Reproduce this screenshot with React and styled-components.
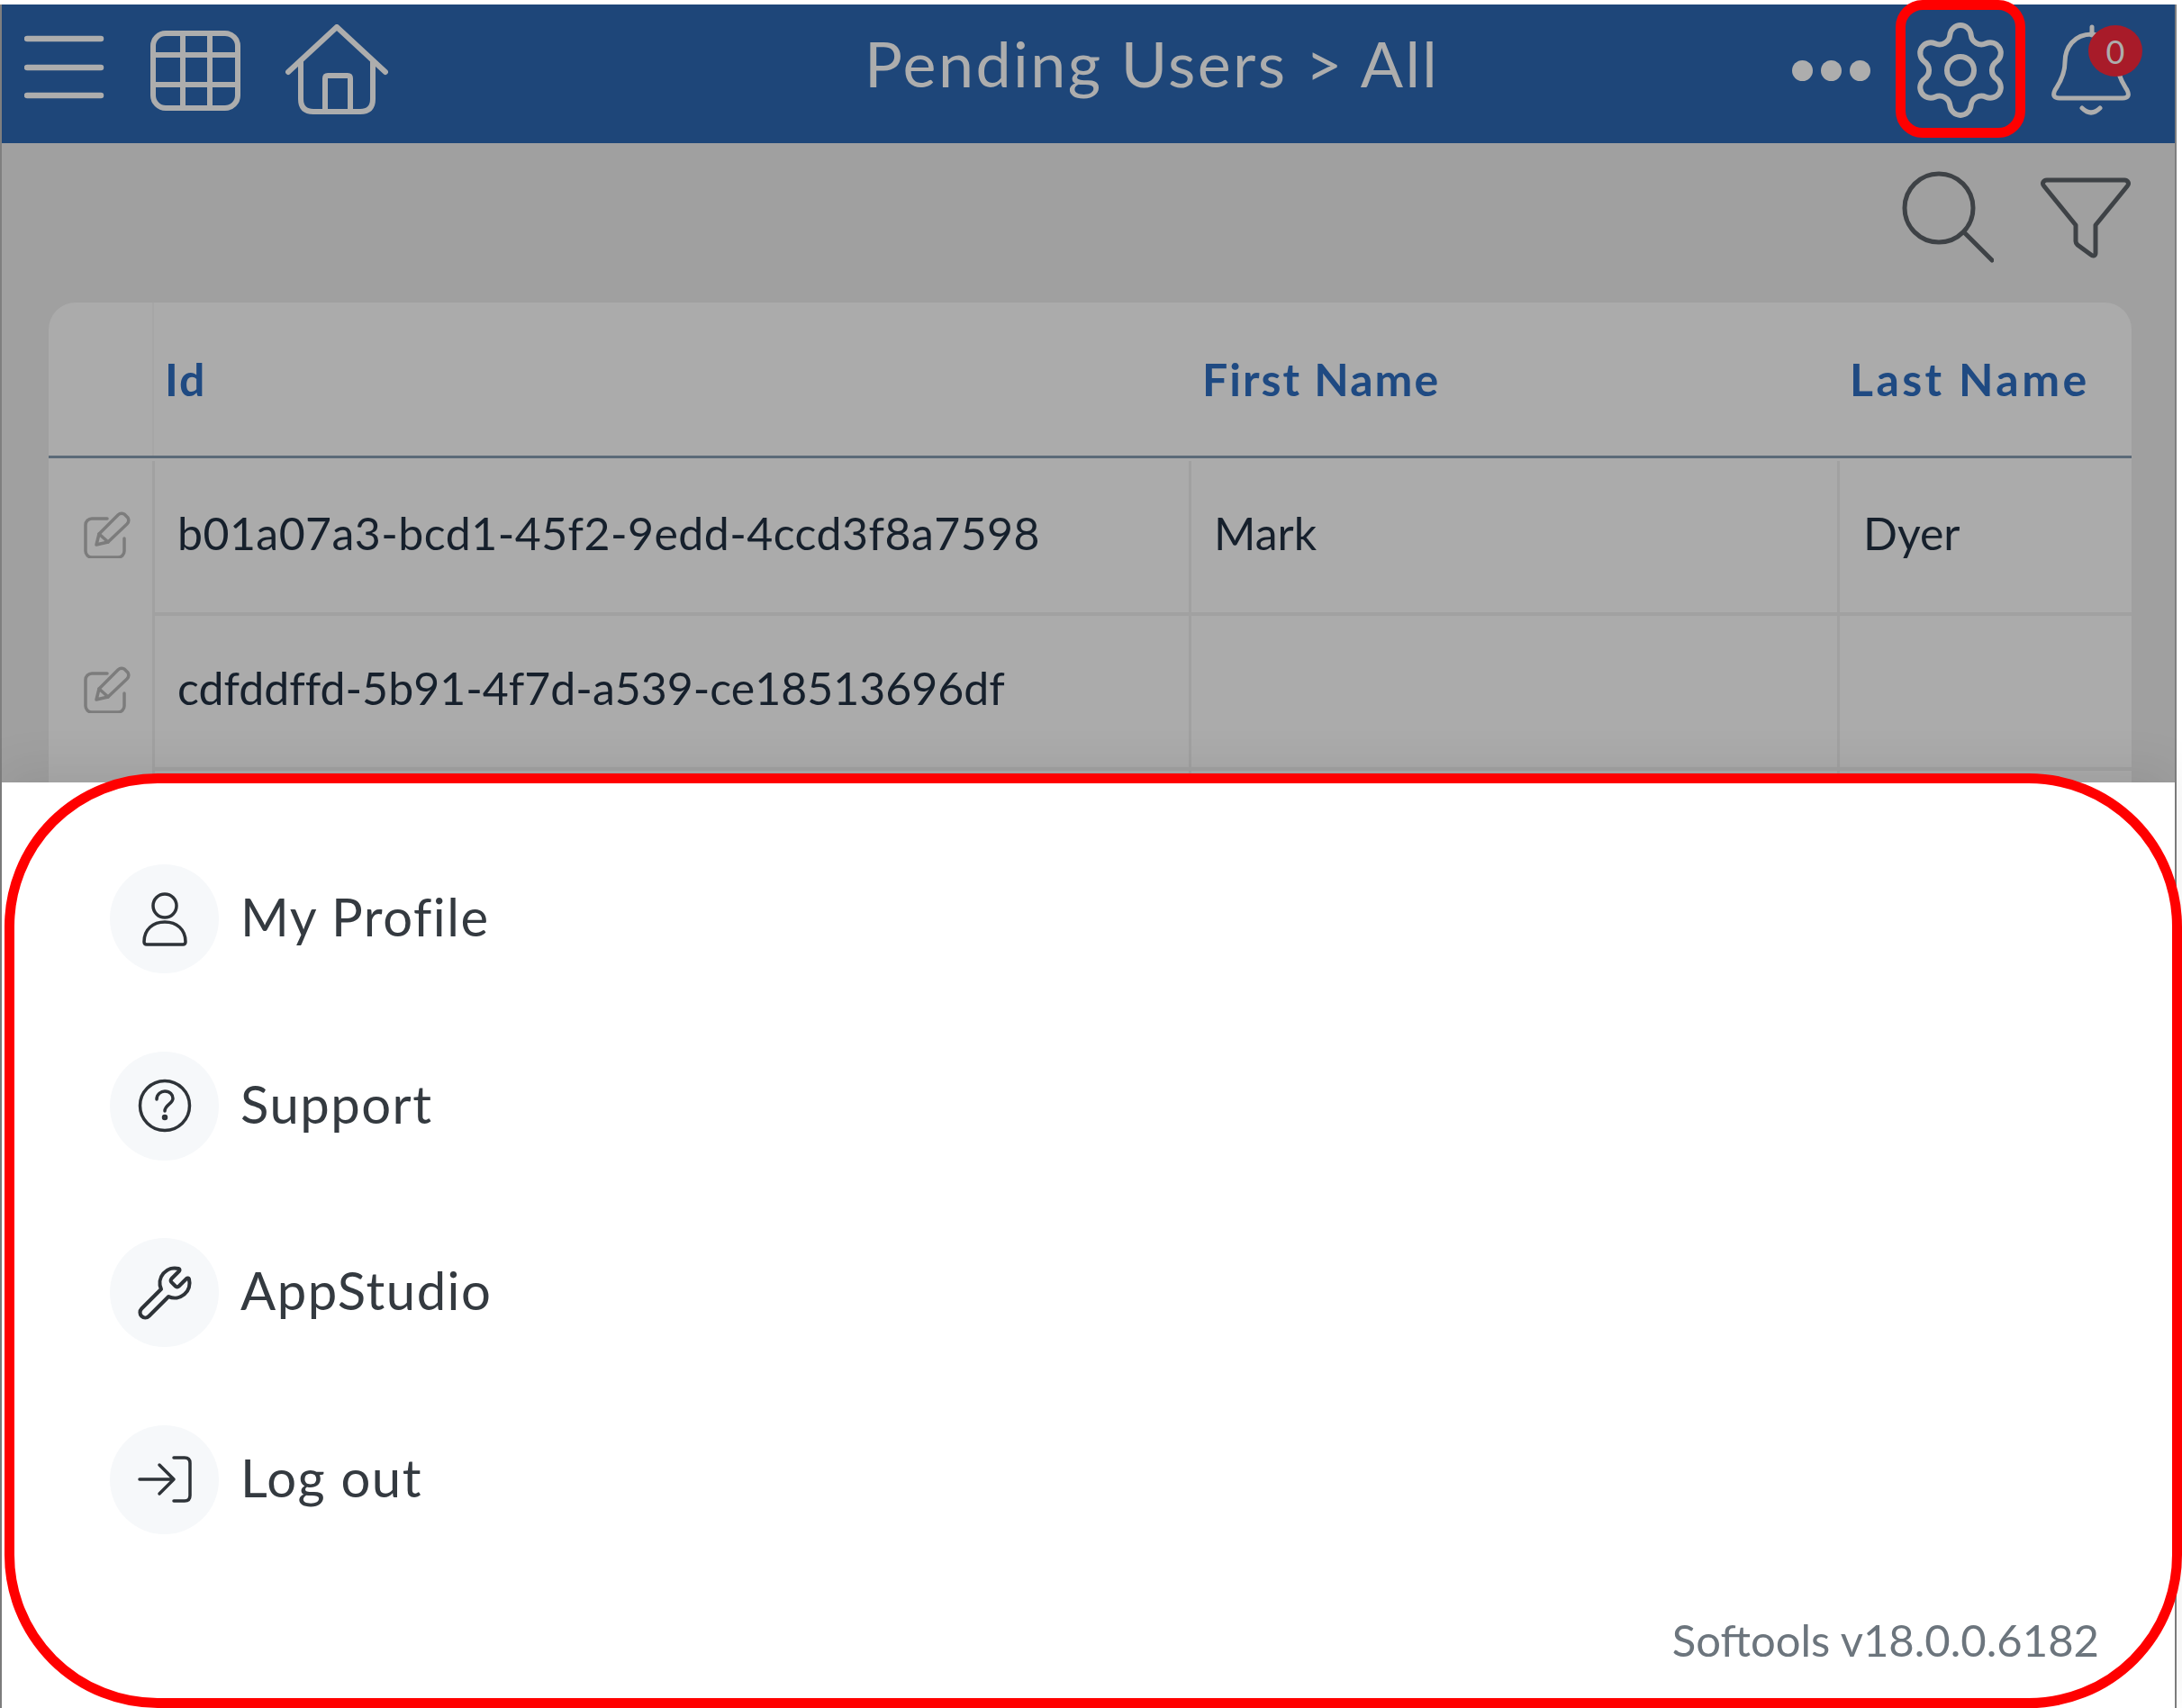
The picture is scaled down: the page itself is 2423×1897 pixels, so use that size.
import React from 'react'
import styled, { createGlobalStyle } from 'styled-components'
import { Settings, Wrench } from 'lucide-react'

const blue = '#1e4679'
const muted = '#adadad'
const ink = '#343a40'
const font = '"Lato", "Noto Sans", sans-serif'

const GlobalStyle = createGlobalStyle`
	html, body {
		margin: 0;
		padding: 0;
		background: #fff;
	}
	body {
		font-family: ${font};
	}
`

const Page = styled.div`
	width: 2417px;
	height: 1897px;
	padding-top: 5px;
	box-sizing: border-box;
	display: flex;
	flex-direction: column;
`

const Frame = styled.div`
	flex: 1;
	display: flex;
	flex-direction: column;
	min-height: 0;
	border-left: 2px solid #7f7f7f;
	border-right: 2px solid #7f7f7f;
`

const Header = styled.header`
	height: 154px;
	flex: none;
	box-sizing: border-box;
	background: ${blue};
	display: flex;
	align-items: center;
	padding: 0 48px 8px 25px;
	color: ${muted};
`

const HeaderLeft = styled.div`
	display: flex;
	align-items: center;
	gap: 50px;
`

const Title = styled.div`
	margin-left: 529px;
	margin-top: -16px;
	font-size: 70px;
	letter-spacing: 2.4px;
	line-height: 1;
	white-space: nowrap;
`

const HeaderRight = styled.div`
	margin-left: auto;
	display: flex;
	align-items: center;
	gap: 50px;
`

const Dots = styled.div`
	display: flex;
	gap: 9px;
`

const Dot = styled.span`
	width: 23px;
	height: 23px;
	border-radius: 50%;
	background: ${muted};
`

const GearBox = styled.div`
	position: relative;
	width: 100px;
	height: 100px;
	display: flex;
	align-items: center;
	justify-content: center;
`

const GearIcon = styled(Settings)`
	flex: none;
`

const Highlight = styled.div`
	position: absolute;
	top: -28px;
	bottom: -25px;
	left: -22px;
	right: -22px;
	border: 11px solid #ff0000;
	border-radius: 30px;
`

const BellBox = styled.div`
	position: relative;
	display: flex;
`

const Badge = styled.span`
	position: absolute;
	top: 1px;
	right: -12px;
	width: 60px;
	height: 57px;
	border-radius: 50%;
	background: #a81b29;
	color: ${muted};
	font-size: 36px;
	display: flex;
	align-items: center;
	justify-content: center;
`

const Backdrop = styled.main`
	height: 710px;
	flex: none;
	overflow: hidden;
	background: #a0a0a0;
`

const Toolbar = styled.div`
	height: 177px;
	box-sizing: border-box;
	display: flex;
	justify-content: flex-end;
	align-items: flex-start;
	gap: 51px;
	padding: 31px 48px 0 0;
	color: #3e4246;
`

const Table = styled.div`
	margin: 0 48px 0 52px;
	background: #ababab;
	border-radius: 30px 30px 0 0;
`

const HeadRow = styled.div`
	display: grid;
	grid-template-columns: 115px 1151px 720px 1fr;
	height: 173px;
	box-sizing: border-box;
	border-bottom: 3px solid #5b6a78;
`

const RowList = styled.div`
	padding-top: 3px;
`

const Row = styled.div`
	display: grid;
	grid-template-columns: 115px 1151px 720px 1fr;
	height: 172px;
	box-sizing: border-box;
`

const HeadCell = styled.div`
	display: flex;
	align-items: center;
	padding-left: ${p => p.$pad || 15}px;
	color: #1f4a82;
	font-size: 50px;
	font-weight: 700;
	letter-spacing: ${p => p.$track || 2}px;
	white-space: nowrap;
	border-left: ${p => (p.$line ? '2px solid #a6a6a6' : 'none')};
`

const Cell = styled.div`
	display: flex;
	align-items: center;
	padding: 0 0 8px ${p => p.$pad || 25}px;
	color: #16202c;
	font-size: 50px;
	letter-spacing: ${p => p.$track || 0}px;
	white-space: nowrap;
	border-left: 3px solid #a1a1a1;
	border-bottom: 4px solid #a1a1a1;
`

const EditCell = styled.div`
	display: flex;
	align-items: center;
	padding: 0 0 8px 39px;
	color: #7c7c7c;
`

const Sheet = styled.section`
	position: relative;
	flex: 1;
	display: flex;
	flex-direction: column;
	background: #fff;
	padding: 91px 84px 0 120px;
	box-shadow: 0 -14px 50px rgba(0, 0, 0, 0.08);
`

const SheetOutline = styled.div`
	position: absolute;
	top: -10px;
	left: 3px;
	right: -8px;
	bottom: 0;
	border: 11px solid #ff0000;
	border-radius: 170px;
	pointer-events: none;
`

const MenuList = styled.div`
	display: flex;
	flex-direction: column;
	gap: 86.5px;
`

const MenuItem = styled.div`
	display: flex;
	align-items: center;
	gap: 24px;
	color: ${ink};
	font-size: 58px;
	letter-spacing: 1.5px;
`

const MenuLabel = styled.span`
	margin-top: -6px;
`

const IconCircle = styled.span`
	width: 121px;
	height: 121px;
	flex: none;
	border-radius: 50%;
	background: #f6f8fa;
	color: #2e3338;
	display: flex;
	align-items: center;
	justify-content: center;
`

const Version = styled.div`
	margin-top: auto;
	padding-bottom: 47px;
	text-align: right;
	color: #6c757d;
	font-size: 49px;
`

const Icon = styled.svg`
	display: block;
	flex: none;
	fill: none;
	stroke: currentColor;
	stroke-linecap: round;
	stroke-linejoin: round;
`

const FilterSvg = styled(Icon)`
	margin-top: 7px;
`

const Hamburger = () => (
	<Icon width="90" height="88" viewBox="0 0 90 88" strokeWidth="6.5">
		<path d="M3 9h82M3 41h82M3 72h82" />
	</Icon>
)

const GridIcon = () => (
	<Icon width="100" height="89" viewBox="0 0 100 89" strokeWidth="6">
		<rect x="3" y="3" width="94" height="83" rx="14" />
		<path d="M36 3v83M66 3v83M3 27h94M3 60h94" />
	</Icon>
)

const HomeIcon = () => (
	<Icon width="114" height="102" viewBox="0 0 114 102" strokeWidth="6">
		<path d="M3 53L57 3l54 50" />
		<path d="M17 41v42q0 14 14 14h52q14 0 14-14V41" />
		<path d="M44 96V60q0-3 3-3h22q3 0 3 3v36" />
	</Icon>
)

const BellIcon = () => (
	<Icon width="90" height="102" viewBox="0 0 90 102" strokeWidth="5">
		<path d="M46 3v9" />
		<path d="M46 11C26 11 16 26 16 42c0 16-8 26-11 31-3 6-1 9 5 9h70c6 0 8-3 5-9-3-5-11-15-11-31 0-16-10-31-29-31z" />
		<path d="M35 93q10 10 20 0" />
	</Icon>
)

const SearchIcon = () => (
	<Icon width="102" height="102" viewBox="0 0 102 102" strokeWidth="5">
		<circle cx="41" cy="41" r="38" />
		<path d="M69 68l31 31" />
	</Icon>
)

const FilterIcon = () => (
	<FilterSvg width="102" height="90" viewBox="0 0 102 90" strokeWidth="5">
		<path d="M8 3h86c4 0 6 4 3 7L62 53v31c0 3-3 4-5 2l-15-11c-1-1-2-2-2-4V53L5 10C2 7 4 3 8 3z" />
	</FilterSvg>
)

const EditIcon = () => (
	<Icon width="52" height="52" viewBox="0 0 52 52" strokeWidth="3.5">
		<path d="M26 8H9a7 7 0 0 0-7 7v29a7 7 0 0 0 7 7h29a7 7 0 0 0 7-7V30" />
		<path d="M14 37l3-12L38 4q3-3 7-1l4 4q2 4-1 7L27 34z" />
		<path d="M17 25l10 9" />
	</Icon>
)

const UserIcon = () => (
	<Icon width="52" height="60" viewBox="0 0 52 60" strokeWidth="3.5">
		<circle cx="26" cy="15" r="13" />
		<path d="M3 55c0-14 10-22 23-22s23 8 23 22c0 2-1 3-3 3H6c-2 0-3-1-3-3z" />
	</Icon>
)

const HelpIcon = () => (
	<Icon width="60" height="60" viewBox="0 0 60 60" strokeWidth="3.5">
		<circle cx="30" cy="30" r="27.5" />
		<path d="M21 23c0-6 5-9 9-9 6 0 9 4 9 8 0 6-9 7-9 14" />
		<circle cx="30" cy="43" r="1.5" />
	</Icon>
)

const LogoutIcon = () => (
	<Icon width="60" height="52" viewBox="0 0 60 52" strokeWidth="3.5">
		<path d="M2 26h38M24 10l16 16-16 16" />
		<path d="M40 2h12q6 0 6 6v36q0 6-6 6H40" />
	</Icon>
)

const menu = [
	{ label: 'My Profile', icon: <UserIcon /> },
	{ label: 'Support', icon: <HelpIcon /> },
	{ label: 'AppStudio', icon: <Wrench size={66} strokeWidth={1.5} /> },
	{ label: 'Log out', icon: <LogoutIcon /> },
]

const rows = [
	{ id: 'b01a07a3-bcd1-45f2-9edd-4ccd3f8a7598', first: 'Mark', last: 'Dyer', track: 0.45 },
	{ id: 'cdfddffd-5b91-4f7d-a539-ce18513696df', first: '', last: '', track: 0.01 },
	{ id: '', first: '', last: '' },
]

export default function App() {
	return (
		<>
			<GlobalStyle />
			<Page>
				<Frame>
					<Header>
						<HeaderLeft>
							<Hamburger />
							<GridIcon />
							<HomeIcon />
						</HeaderLeft>
						<Title>Pending Users &gt; All</Title>
						<HeaderRight>
							<Dots>
								<Dot />
								<Dot />
								<Dot />
							</Dots>
							<GearBox>
								<GearIcon size={120} strokeWidth={1.2} />
								<Highlight />
							</GearBox>
							<BellBox>
								<BellIcon />
								<Badge>0</Badge>
							</BellBox>
						</HeaderRight>
					</Header>
					<Backdrop>
						<Toolbar>
							<SearchIcon />
							<FilterIcon />
						</Toolbar>
						<Table>
							<HeadRow>
								<HeadCell />
								<HeadCell $line $pad={12}>Id</HeadCell>
								<HeadCell>First Name</HeadCell>
								<HeadCell $pad={14} $track={3.4}>Last Name</HeadCell>
							</HeadRow>
							<RowList>
								{rows.map((r, i) => (
									<Row key={i}>
										<EditCell>{r.id && <EditIcon />}</EditCell>
										<Cell $track={r.track}>{r.id}</Cell>
										<Cell $pad={25}>{r.first}</Cell>
										<Cell $pad={26}>{r.last}</Cell>
									</Row>
								))}
							</RowList>
						</Table>
					</Backdrop>
					<Sheet>
						<MenuList>
							{menu.map(m => (
								<MenuItem key={m.label}>
									<IconCircle>{m.icon}</IconCircle>
									<MenuLabel>{m.label}</MenuLabel>
								</MenuItem>
							))}
						</MenuList>
						<Version>Softools v18.0.0.6182</Version>
						<SheetOutline />
					</Sheet>
				</Frame>
			</Page>
		</>
	)
}
